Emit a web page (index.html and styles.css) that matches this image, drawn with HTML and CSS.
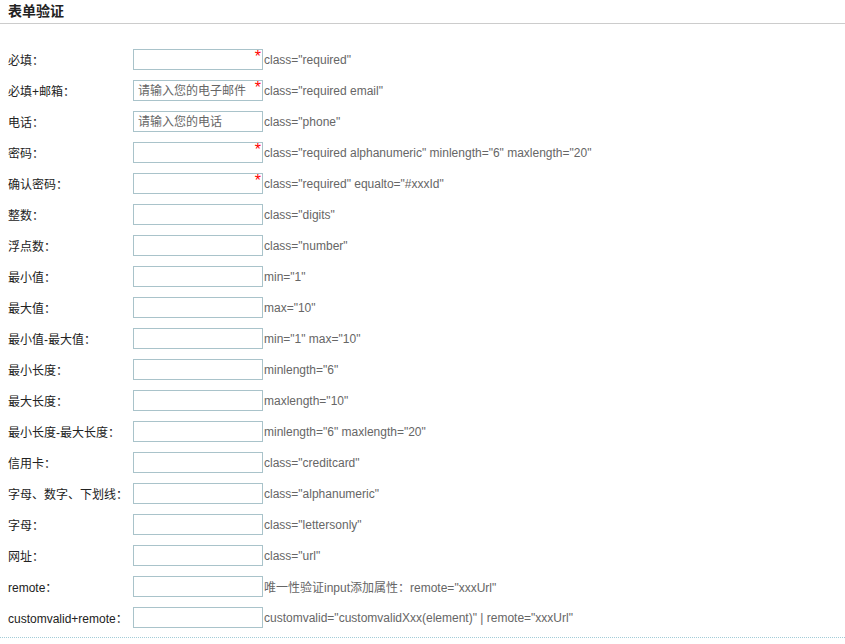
FILE: index.html
```html
<!DOCTYPE html>
<html lang="zh-CN">
<head>
<meta charset="utf-8">
<title>表单验证</title>
<link rel="stylesheet" href="styles.css">
</head>
<body>
<div class="page">
  <h2 class="title">表单验证</h2>
  <form class="form">
    <div class="row"><label class="label">必填：</label><span class="field"><input class="input" type="text"><i class="star">*</i></span><span class="hint">class="required"</span></div>
    <div class="row"><label class="label">必填+邮箱：</label><span class="field"><input class="input" type="text" placeholder="请输入您的电子邮件"><i class="star">*</i></span><span class="hint">class="required email"</span></div>
    <div class="row"><label class="label">电话：</label><span class="field"><input class="input" type="text" placeholder="请输入您的电话"></span><span class="hint">class="phone"</span></div>
    <div class="row"><label class="label">密码：</label><span class="field"><input class="input" type="password"><i class="star">*</i></span><span class="hint">class="required alphanumeric" minlength="6" maxlength="20"</span></div>
    <div class="row"><label class="label">确认密码：</label><span class="field"><input class="input" type="password"><i class="star">*</i></span><span class="hint">class="required" equalto="#xxxId"</span></div>
    <div class="row"><label class="label">整数：</label><span class="field"><input class="input" type="text"></span><span class="hint">class="digits"</span></div>
    <div class="row"><label class="label">浮点数：</label><span class="field"><input class="input" type="text"></span><span class="hint">class="number"</span></div>
    <div class="row"><label class="label">最小值：</label><span class="field"><input class="input" type="text"></span><span class="hint">min="1"</span></div>
    <div class="row"><label class="label">最大值：</label><span class="field"><input class="input" type="text"></span><span class="hint">max="10"</span></div>
    <div class="row"><label class="label">最小值-最大值：</label><span class="field"><input class="input" type="text"></span><span class="hint">min="1" max="10"</span></div>
    <div class="row"><label class="label">最小长度：</label><span class="field"><input class="input" type="text"></span><span class="hint">minlength="6"</span></div>
    <div class="row"><label class="label">最大长度：</label><span class="field"><input class="input" type="text"></span><span class="hint">maxlength="10"</span></div>
    <div class="row"><label class="label">最小长度-最大长度：</label><span class="field"><input class="input" type="text"></span><span class="hint">minlength="6" maxlength="20"</span></div>
    <div class="row"><label class="label">信用卡：</label><span class="field"><input class="input" type="text"></span><span class="hint">class="creditcard"</span></div>
    <div class="row"><label class="label">字母、数字、下划线：</label><span class="field"><input class="input" type="text"></span><span class="hint">class="alphanumeric"</span></div>
    <div class="row"><label class="label">字母：</label><span class="field"><input class="input" type="text"></span><span class="hint">class="lettersonly"</span></div>
    <div class="row"><label class="label">网址：</label><span class="field"><input class="input" type="text"></span><span class="hint">class="url"</span></div>
    <div class="row"><label class="label">remote：</label><span class="field"><input class="input" type="text"></span><span class="hint">唯一性验证input添加属性：remote="xxxUrl"</span></div>
    <div class="row"><label class="label">customvalid+remote：</label><span class="field"><input class="input" type="text"></span><span class="hint">customvalid="customvalidXxx(element)" | remote="xxxUrl"</span></div>
  </form>
</div>
</body>
</html>
```
FILE: styles.css
```css
html, body {
  margin: 0;
  padding: 0;
  background: #fff;
}
body {
  font-family: "Liberation Sans", Arial, "Noto Sans CJK SC", sans-serif;
  font-size: 12px;
  color: #222;
}
.title {
  margin: 0;
  padding: 2px 8px 0;
  height: 21px;
  line-height: 18px;
  font-size: 14px;
  font-weight: bold;
  color: #222;
  border-bottom: 1px solid #cccccc;
}
.form {
  display: flex;
  flex-direction: column;
  gap: 10px;
  padding: 25px 0 9px;
  border-bottom: 1px dotted #a3ccd8;
}
.row {
  display: flex;
  align-items: center;
  height: 21px;
}
.label {
  width: 125px;
  padding-left: 8px;
  flex-shrink: 0;
  color: #222;
}
.field {
  position: relative;
  display: flex;
  width: 130px;
  height: 21px;
  flex-shrink: 0;
}
.input {
  box-sizing: border-box;
  width: 130px;
  height: 21px;
  margin: 0;
  padding: 0 4px;
  border: 1px solid #a9c3ca;
  border-radius: 0;
  font-family: inherit;
  font-size: 12px;
  color: #333;
  background: #fff;
  outline: none;
}
.input::placeholder {
  color: #666;
}
.star {
  position: absolute;
  right: 2px;
  top: 0;
  font-style: normal;
  color: #ff0000;
  font-size: 16px;
  line-height: 16px;
}
.hint {
  padding-left: 1px;
  color: #666;
  white-space: nowrap;
}
```
